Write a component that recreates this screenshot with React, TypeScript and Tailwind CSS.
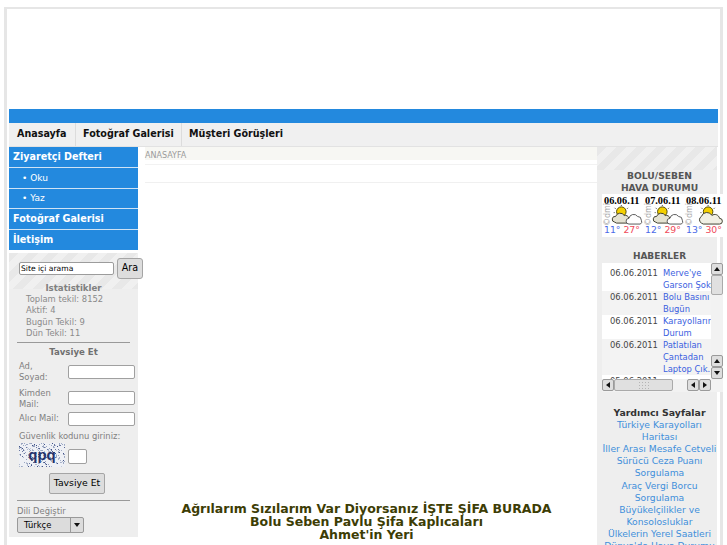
import React from 'react';

const stripes = 'bg-[repeating-linear-gradient(135deg,#e8e8e8_0,#e8e8e8_7px,#f0f0f0_7px,#f0f0f0_14px)]';
const track = 'bg-[#f2f2f2] bg-[radial-gradient(#d0d0d0_0.5px,transparent_0.6px)] bg-[length:2px_2px]';

function Triangle({ dir }: { dir: 'up' | 'down' | 'left' | 'right' }) {
  const pts = { up: '1,6 4,2 7,6', down: '1,2 4,6 7,2', left: '6,1 2,4 6,7', right: '2,1 6,4 2,7' }[dir];
  return (
    <svg width="8" height="8" viewBox="0 0 8 8">
      <polygon points={pts} fill="#111" />
    </svg>
  );
}

function ScrollBtn({ dir }: { dir: 'up' | 'down' | 'left' | 'right' }) {
  return (
    <div className="w-[12px] h-[12px] shrink-0 flex items-center justify-center rounded-[2px] border border-[#9a9a9a] bg-[#dedede]">
      <Triangle dir={dir} />
    </div>
  );
}

function Weather({ date, low, high, partly }: { date: string; low: string; high: string; partly?: boolean }) {
  return (
    <div className="w-[41px] shrink-0 flex flex-col">
      <div className="h-[11px] text-[10.3px] leading-[14px] font-bold text-black whitespace-nowrap font-['Liberation_Serif',serif]">{date}</div>
      <div className="h-[20px] w-full relative">
        <span className="absolute -left-[7px] top-[6px] w-[22px] text-center text-[8px] leading-[8px] text-[#a8a8a8] -rotate-90">©dmi</span>
        <svg className="ml-[7px]" width="34" height="20" viewBox="0 0 34 21">
          {partly ? (
            <>
              <circle cx="10" cy="7" r="5" fill="#f4d000" stroke="#4a4400" strokeWidth="1" />
              <path d="M10 0v1M3 3l1 1M17 3l-1 1M2 8h1" stroke="#444" strokeWidth="1" />
              <path d="M3 18a3 3 0 0 1 1-6 5 5 0 0 1 9-1 4 4 0 0 1 5 3 3 3 0 0 1 0 5H5z" fill="#e4e2d2" stroke="#3a3a2a" strokeWidth="1" />
              <path d="M18 20a3 3 0 0 1 0-6 5 5 0 0 1 9-2 4 4 0 0 1 4 4 3 3 0 0 1-1 4z" fill="#fff" stroke="#555" strokeWidth="1" />
            </>
          ) : (
            <>
              <circle cx="15" cy="7" r="5" fill="#f4d000" stroke="#4a4400" strokeWidth="1" />
              <path d="M15 0v1M8 3l1 1M22 3l-1 1M7 8h1" stroke="#444" strokeWidth="1" />
              <path d="M8 19a4 4 0 0 1 0-7 6 6 0 0 1 11-1 5 5 0 0 1 8 3 3 3 0 0 1 0 6H10z" fill="#f0efe4" stroke="#3a3a2a" strokeWidth="1" />
            </>
          )}
        </svg>
      </div>
      <div className="text-[9.3px] leading-[10px] whitespace-nowrap">
        <span className="text-[#4a6ae8]">{low}</span> <span className="text-[#f04a5a]">{high}</span>
      </div>
    </div>
  );
}

function Captcha() {
  const dots: React.ReactNode[] = [];
  let seed = 17;
  for (let i = 0; i < 420; i++) {
    seed = (seed * 137 + 71) % 1009;
    const x = seed % 46;
    seed = (seed * 137 + 71) % 1009;
    const y = seed % 24;
    dots.push(<rect key={i} x={x} y={y} width="1" height="1" fill={i % 3 === 0 ? '#3d4f85' : '#97a3bf'} opacity={i % 2 ? 0.85 : 0.5} />);
  }
  return (
    <div className="relative w-[46px] h-[24px] bg-[#eef0f5] overflow-hidden flex items-center justify-center">
      <svg className="absolute inset-0" width="46" height="24">{dots}</svg>
      <span className="relative text-[15px] leading-[20px] font-bold text-[#26336b] font-['Liberation_Sans',sans-serif]">qpq</span>
    </div>
  );
}

const news = [
  { title: ["Merve'ye", 'Garson Şoku'] },
  { title: ['Bolu Basını', 'Bugün'], alt: true },
  { title: ['Karayolların', 'Durum'] },
  { title: ['Patlatılan', 'Çantadan', 'Laptop Çık.'], alt: true },
];

const links = [
  'Türkiye Karayolları Haritası',
  'İller Arası Mesafe Cetveli',
  'Sürücü Ceza Puanı Sorgulama',
  'Araç Vergi Borcu Sorgulama',
  'Büyükelçilikler ve Konsolosluklar',
  'Ülkelerin Yerel Saatleri',
  "Dünya'da Hava Durumu",
];

const field = 'block w-[67px] h-[14px] rounded-[2px] border border-[#a0a0a0] bg-white';

export default function App() {
  return (
    <div className="h-[545px] w-[727px] overflow-hidden bg-white font-['DejaVu_Sans',sans-serif] text-[8.4px]">
      <div className="ml-[4px] mt-[7px] w-[719px] h-[560px] bg-white border-l-[3px] border-t-[2px] border-r-[3px] border-[#e6e6e6] pl-[2px] pr-[2px]">
        <div className="h-[100px]" />
        <div className="h-[14px] bg-[#2389de]" />
        <nav className="h-[24px] bg-[#f0f0f0] flex items-stretch text-[9.6px] font-bold text-[#111] border-b border-[#e2e2e2]">
          <div className="w-[67px] pl-[8px] flex items-center border-r border-[#dcdcdc]">Anasayfa</div>
          <div className="w-[106px] pl-[7px] flex items-center border-r border-[#dcdcdc]">Fotoğraf Galerisi</div>
          <div className="pl-[7px] flex items-center">Müşteri Görüşleri</div>
        </nav>

        <div className="flex">
          <aside className="w-[129px] shrink-0">
            <div className="flex flex-col gap-[1px] bg-[#cfe3f5] text-white">
              <div className="h-[20px] bg-[#2389de] flex items-center pl-[4px] text-[9.6px] font-bold">Ziyaretçi Defteri</div>
              <div className="h-[20px] bg-[#2389de] flex items-center pl-[13px] pt-[2px] text-[9px]">• Oku</div>
              <div className="h-[19px] bg-[#2389de] flex items-center pl-[13px] pt-[1px] text-[9px]">• Yaz</div>
              <div className="h-[20px] bg-[#2389de] flex items-center pl-[4px] text-[9.6px] font-bold">Fotoğraf Galerisi</div>
              <div className="h-[20px] bg-[#2389de] flex items-center pl-[4px] text-[9.6px] font-bold">İletişim</div>
            </div>
            <div className="mt-[3px] h-[284px] bg-[#eeeeee] relative text-[#808080]">
              <div className={`absolute inset-x-0 top-0 h-[36px] ${stripes}`} />
              <div className="relative">
                <div className="flex items-center gap-[3px] pl-[10px] pt-[5px]">
                  <div className="w-[95px] shrink-0 h-[13px] border border-[#9c9c9c] bg-white rounded-[2px] px-[1px] text-[7.6px] leading-[11px] text-black whitespace-nowrap">Site içi arama</div>
                  <div className="w-[26px] shrink-0 h-[21px] border border-[#a5a5a5] rounded-[3px] bg-[#dddddd] text-black text-[9.6px] flex items-center justify-center">Ara</div>
                </div>
                <div className="text-center font-bold text-[8.6px] leading-[12px] mt-[3px]">Istatistikler</div>
                <div className="pl-[17px] text-[#8a8a8a] leading-[11.5px] -mt-[0.5px]">
                  <div>Toplam tekil: 8152</div>
                  <div>Aktif: 4</div>
                  <div>Bugün Tekil: 9</div>
                  <div>Dün Tekil: 11</div>
                </div>
                <div className="border-t border-[#999] mt-[2px] ml-[8px] w-[113px]" />
                <div className="text-center font-bold text-[#707070] text-[8.6px] leading-[12px] mt-[3px]">Tavsiye Et</div>
                <div className="flex pl-[10px] mt-[2px] h-[24px]">
                  <div className="w-[49px] pt-[1px] leading-[11.5px]">Ad,<br />Soyad:</div>
                  <input className={`${field} mt-[5px]`} />
                </div>
                <div className="flex pl-[10px] mt-[2px] h-[22px]">
                  <div className="w-[49px] pt-[2px] leading-[11px]">Kimden<br />Mail:</div>
                  <input className={`${field} mt-[5px]`} />
                </div>
                <div className="flex items-center pl-[10px] mt-[4px]">
                  <div className="w-[49px]">Alıcı Mail:</div>
                  <input className={field} />
                </div>
                <div className="pl-[10px] mt-[4px] leading-[12px]">Güvenlik kodunu giriniz:</div>
                <div className="flex items-center gap-[3px] pl-[10px] mt-[1px]">
                  <Captcha />
                  <input className="block w-[19px] h-[15px] mt-[3px] border border-[#a0a0a0] rounded-[2px] bg-white" />
                </div>
                <div className="ml-[40px] mt-[6px] w-[56px] h-[21px] border border-[#a5a5a5] rounded-[2px] bg-[#dddddd] text-black text-[9.3px] flex items-center justify-center">Tavsiye Et</div>
                <div className="border-t border-[#999] mt-[6px] ml-[8px] w-[113px]" />
                <div className="pl-[8px] mt-[4px] leading-[12px]">Dili Değiştir</div>
                <div className="ml-[8px] w-[67px] h-[16px] flex border border-[#999] rounded-[2px] bg-[#dcdcdc] text-black">
                  <div className="flex-1 pl-[6px] leading-[14px] border-r border-[#999]">Türkçe</div>
                  <div className="w-[12px] flex items-center justify-center"><Triangle dir="down" /></div>
                </div>
              </div>
            </div>
          </aside>

          <main className="flex-1 min-w-0 flex flex-col">
            <div className="ml-[7px] h-[13px] bg-[#f7f7f3] text-[#9a9a9a] text-[8px] leading-[17px]">ANASAYFA</div>
            <div className="h-[4px]" />
            <div className="ml-[7px] h-[1px] bg-[#f2f2f2]" />
            <div className="h-[17px]" />
            <div className="ml-[7px] h-[1px] bg-[#f0f0f0]" />
            <div className="mt-[319px] pr-[2px] text-center font-bold text-[12.5px] leading-[13px] text-[#3d3d05]">
              Ağrılarım Sızılarım Var Diyorsanız İŞTE ŞİFA BURADA<br />
              Bolu Seben Pavlu Şifa Kaplıcaları<br />
              Ahmet'in Yeri
            </div>
          </main>

          <aside className="w-[120px] shrink-0 mr-[1px] bg-[#eeeeee] text-[#333]">
            <div className={`h-[23px] ${stripes}`} />
            <div className="text-center pl-[5px] font-bold text-[9.2px] leading-[12px] text-[#555]">
              <div>BOLU/SEBEN</div>
              <div>HAVA DURUMU</div>
            </div>
            <div className="ml-[5px] w-[121px] h-[43px] bg-white flex pl-[2px]">
              <Weather date="06.06.11" low="11°" high="27°" partly />
              <Weather date="07.06.11" low="12°" high="29°" partly />
              <Weather date="08.06.11" low="13°" high="30°" />
            </div>
            <div className="text-center pl-[5px] font-bold text-[9px] text-[#555] leading-[13px] pt-[13px]">HABERLER</div>
            <div className="ml-[5px] w-[121px] h-[129px] bg-white relative">
              <div className="flex h-[116px] overflow-hidden">
                <div className="w-[109px] pt-[4px] overflow-hidden shrink-0 text-[8.4px] leading-[12px]">
                  {news.map((n, i) => (
                    <div key={i} className={`flex whitespace-nowrap ${n.alt ? 'bg-[#f3f3f3]' : 'bg-white'}`}>
                      <div className="w-[61px] pl-[8px] shrink-0 text-[#444]">06.06.2011</div>
                      <div className="text-[#3a5ee0]">
                        {n.title.map(t => <div key={t}>{t}</div>)}
                      </div>
                    </div>
                  ))}
                  <div className="pl-[8px] text-[#444]">05.06.2011</div>
                </div>
                <div className={`w-[12px] flex flex-col ${track}`}>
                  <ScrollBtn dir="up" />
                  <div className="w-[12px] h-[20px] border border-[#aaa] rounded-[2px] bg-[#e0e0e0]" />
                  <div className="flex-1" />
                  <ScrollBtn dir="up" />
                  <ScrollBtn dir="down" />
                </div>
              </div>
              <div className={`flex h-[13px] ${track}`}>
                <ScrollBtn dir="left" />
                <div className="w-[59px] h-[12px] border border-[#aaa] rounded-[2px] bg-[#e0e0e0] flex items-center justify-center">
                  <div className="w-[12px] h-[8px] bg-[radial-gradient(#b5b5b5_0.6px,transparent_0.7px)] bg-[length:3px_3px]" />
                </div>
                <div className="w-[14px]" />
                <ScrollBtn dir="left" />
                <ScrollBtn dir="right" />
              </div>
            </div>
            <div className="text-center pl-[5px] text-[9.2px] leading-[12.1px] pt-[15px]">
              <div className="font-bold text-[#333] text-[9.4px]">Yardımcı Sayfalar</div>
              {links.map(l => <div key={l} className="text-[#3f8fdb]">{l}</div>)}
            </div>
          </aside>
        </div>
      </div>
    </div>
  );
}
